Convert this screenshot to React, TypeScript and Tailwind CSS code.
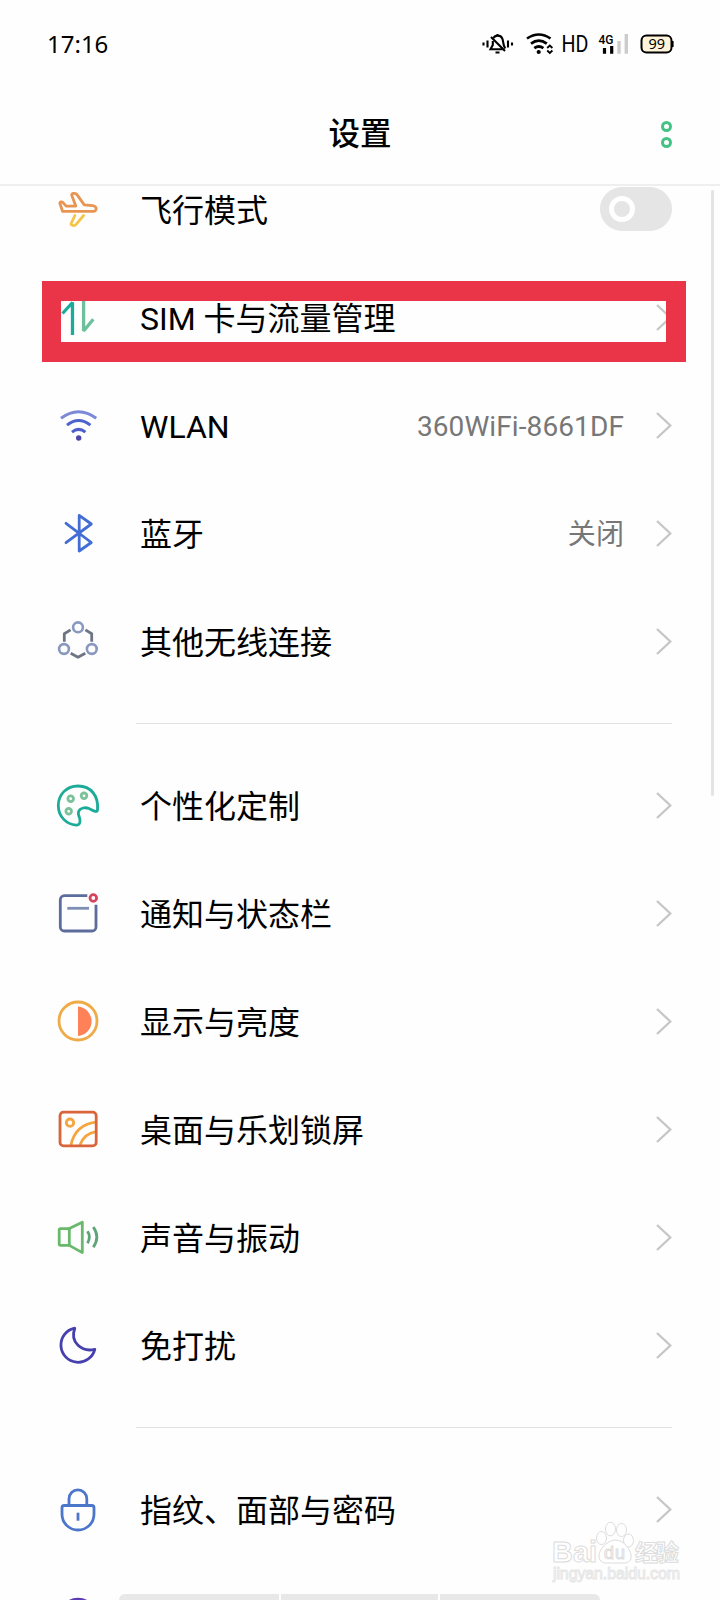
import { ReactNode } from 'react';

type Row = {
  label: string;
  icon: ReactNode;
  value?: string;
  toggle?: boolean;
  highlighted?: boolean;
};

const Icon = ({ children }: { children: ReactNode }) => (
  <svg
    viewBox="0 0 48 48"
    className="h-12 w-12 shrink-0"
    fill="none"
    strokeWidth="2.8"
    strokeLinecap="round"
    strokeLinejoin="round"
  >
    {children}
  </svg>
);

const connections: Row[] = [
  {
    label: '飞行模式',
    toggle: true,
    icon: (
      <Icon>
        <path
          d="M17.7 10.2C17 8.4 21.6 7.6 23 9.6L30.3 19.9L38.5 20.6C43.4 21.2 43.2 26.3 39.3 26.3H8.5L5.9 18.2C5.6 16.9 8 16.4 9 17.6L12.2 21.1L21.8 21Z"
          stroke="#e89552"
        />
        <path d="M20.9 30.5L17 38.8C16.4 40.3 20.4 41.4 21.9 39.6L29.6 30.5" stroke="#f3c64b" />
      </Icon>
    ),
  },
  {
    label: 'SIM 卡与流量管理',
    highlighted: true,
    icon: (
      <Icon>
        <g strokeWidth="3.3" strokeLinecap="butt" strokeLinejoin="bevel">
          <path d="M18.5 42V9.5L8.5 20.5" stroke="#1cab9a" />
          <path d="M29.6 5V38L39.3 26.2" stroke="#6ebf9b" />
        </g>
      </Icon>
    ),
  },
  {
    label: 'WLAN',
    value: '360WiFi-8661DF',
    icon: (
      <Icon>
        <g strokeWidth="3" strokeLinecap="butt">
          <path d="M7 17.3Q24.6 4.3 42.2 17.3" stroke="#7a89d8" />
          <path d="M13 24.1Q24.6 14.9 36.4 24.1" stroke="#4c63cc" />
          <path d="M18 31.2Q24.6 25.6 31.4 31.2" stroke="#4c5fca" />
        </g>
        <circle cx="24.7" cy="37" r="2.7" fill="#4f44a8" />
      </Icon>
    ),
  },
  {
    label: '蓝牙',
    value: '关闭',
    icon: (
      <Icon>
        <path d="M12 14.3L37.3 33.5L25.2 42V6.3L37.3 15L12 33.7" stroke="#416dd4" />
      </Icon>
    ),
  },
  {
    label: '其他无线连接',
    icon: (
      <Icon>
        <g stroke="#6d7483" strokeLinecap="butt">
          <path d="M16.6 12.9L10.3 16.8V24.8" />
          <path d="M31.4 12.9L37.7 16.8V24.8" />
          <path d="M16.7 36.2L24 40.2L31.3 36.2" />
        </g>
        <g stroke="#8998be" strokeWidth="2.6">
          <circle cx="24" cy="10.3" r="4.9" />
          <circle cx="10" cy="32" r="4.9" />
          <circle cx="37.8" cy="32" r="4.9" />
        </g>
      </Icon>
    ),
  },
];

const personal: Row[] = [
  {
    label: '个性化定制',
    icon: (
      <Icon>
        <path
          d="M43.5 29C44.8 15 37 5 24 5C12.5 5 4.3 13.5 4.3 24.5C4.3 36 13 43.5 22 44.1C25.5 44.3 26.4 41.8 25.9 38.5C25.5 35.5 23.5 33.5 24.6 30.6C26.2 26.6 31.5 26 35 27.6C37 28.5 38.5 29.8 41.2 30.3C42.8 30.6 43.4 30.2 43.5 29Z"
          stroke="#1cab98"
        />
        <g stroke="#7bc29a">
          <circle cx="16.7" cy="17.7" r="2.8" />
          <circle cx="30" cy="14.8" r="2.8" />
          <circle cx="14.7" cy="30.3" r="2.8" />
        </g>
      </Icon>
    ),
  },
  {
    label: '通知与状态栏',
    icon: (
      <Icon>
        <path
          d="M33.3 6.7H10.3A4 4 0 0 0 6.3 10.7V38A4 4 0 0 0 10.3 42H38A4 4 0 0 0 42 38V15.7"
          stroke="#5c6c9c"
          strokeLinecap="butt"
        />
        <path d="M13.3 19.3H35" stroke="#7f8eb4" strokeLinecap="butt" />
        <circle cx="39.3" cy="9" r="3.3" stroke="#d8435c" />
      </Icon>
    ),
  },
  {
    label: '显示与亮度',
    icon: (
      <Icon>
        <circle cx="24" cy="24" r="19" stroke="#efab48" />
        <path d="M24 9.5A14.8 14.8 0 0 1 24 39Z" fill="#ff8158" />
      </Icon>
    ),
  },
  {
    label: '桌面与乐划锁屏',
    icon: (
      <Icon>
        <g stroke="#f4a540" strokeLinecap="butt">
          <circle cx="16" cy="17.7" r="3.7" />
          <path d="M17 40C19.5 28 27 19 42 17.2" />
          <path d="M26 40C28.5 33 33 28 42 26.6" />
        </g>
        <rect x="6" y="7.2" width="36.2" height="33.7" rx="3.5" stroke="#da653b" />
      </Icon>
    ),
  },
  {
    label: '声音与振动',
    icon: (
      <Icon>
        <path d="M15.3 15.6H6.6Q5.2 15.6 5.2 17V31Q5.2 32.4 6.6 32.4H15.3Z" stroke="#69b96c" />
        <path d="M15.3 15.6L28.3 9.2V39.6L15.3 32.4" stroke="#69b96c" />
        <path d="M33.5 18.3Q37.2 24 33.5 30.2" stroke="#5da478" strokeLinecap="butt" />
        <path d="M39.3 14Q46.4 24 39.3 34.3" stroke="#5da478" strokeLinecap="butt" />
      </Icon>
    ),
  },
  {
    label: '免打扰',
    icon: (
      <Icon>
        <path
          d="M20.8 7.2A17.2 17.2 0 1 0 40.8 28.3C28 31.5 15.5 21.5 20.8 7.2Z"
          stroke="#463fae"
        />
      </Icon>
    ),
  },
];

const security: Row[] = [
  {
    label: '指纹、面部与密码',
    icon: (
      <Icon>
        <path d="M15 20V13.8A8.9 8.9 0 0 1 32.8 13.8V20" stroke="#4b76ca" />
        <path
          d="M10.2 20.5H37.8Q40 20.5 40 22.7V29C40 38 33 45 24 45S8 38 8 29V22.7Q8 20.5 10.2 20.5Z"
          stroke="#4b76ca"
        />
        <path d="M24 27.7V35.7" stroke="#4b76ca" strokeLinecap="butt" />
      </Icon>
    ),
  },
  {
    label: '',
    icon: (
      <Icon>
        <circle cx="24" cy="24.5" r="18.3" stroke="#5b3cb6" />
      </Icon>
    ),
  },
];

const Toggle = () => (
  <span className="flex h-11 w-[72px] items-center rounded-full bg-[#e5e5e5] pl-[9px]">
    <span className="h-[26px] w-[26px] rounded-full border-[5px] border-white" />
  </span>
);

const Chevron = () => (
  <svg viewBox="0 0 16 28" className="h-7 w-4" fill="none" stroke="#c6c6c6" strokeWidth="2.3">
    <path d="M1 2L14.3 14.5L1 27" />
  </svg>
);

const SettingsRow = ({ row }: { row: Row }) => (
  <div className="relative flex h-[108px] items-center pr-12 pl-[54px]">
    {row.icon}
    <span className="ml-[38px] pt-[3px] text-[32px] leading-none whitespace-nowrap text-black">
      {row.label}
    </span>
    <div className="ml-auto flex items-center gap-8">
      {row.value && (
        <span className="pt-1 text-[28px] leading-none tracking-[0.1px] text-[#777]">
          {row.value}
        </span>
      )}
      {row.toggle ? <Toggle /> : <Chevron />}
    </div>
    {row.highlighted && (
      <div className="absolute top-[18px] left-[42px] h-[81px] w-[644px] border-[20px] border-l-[19px] border-[#ea3448]" />
    )}
  </div>
);

const Divider = () => (
  <div className="flex h-14 items-center pr-12 pl-[136px]">
    <div className="h-px w-full bg-[#e2e2e2]" />
  </div>
);

const StatusBar = () => (
  <div className="flex h-[88px] items-center justify-between pr-[46px] pl-[47px]">
    <span className="font-['Noto_Sans'] text-2xl leading-none text-black">17:16</span>
    <svg viewBox="482 30 192 28" className="h-7 w-48" fill="none" stroke="#000">
      {/* muted bell */}
      <g strokeWidth="2.1">
        <path d="M483.5 42.5V45.5M487.5 40.5V47.5M508 40.5V47.5M512 42.5V45.5" />
        <path d="M492.8 41V45L490.5 49.3H502.5M493.5 38C495 35 500.5 34.5 502.3 38.5C503.5 41 502.5 44 505.2 48.5M497.5 34V36" />
        <path d="M491 37L505 51M495.5 52.5H499.5" />
      </g>
      <g strokeWidth="2.7">
        <path d="M527 38.5Q538.8 30.5 550.5 38.5" />
        <path d="M531 43.6Q538.8 37.6 546.8 43.6" />
        <path d="M534.3 48.2Q538.8 44.8 543.4 48.2" />
      </g>
      <circle cx="538.7" cy="52" r="2.1" fill="#000" stroke="none" />
      <path d="M547.2 48L549.8 45.5L552.4 48M547.2 50.5L549.8 53L552.4 50.5" strokeWidth="1.8" />
      <text
        x="561.5"
        y="52.3"
        fill="#000"
        stroke="none"
        className="font-[Roboto] text-[23px]"
        textLength="27"
        lengthAdjust="spacingAndGlyphs"
      >
        HD
      </text>
      <text
        x="598.5"
        y="43.6"
        fill="#000"
        stroke="none"
        className="font-[Roboto] text-[13px] font-medium"
        textLength="15"
        lengthAdjust="spacingAndGlyphs"
      >
        4G
      </text>
      <path d="M604.5 48V53.8M611.7 46V53.8" strokeWidth="3.2" />
      <path d="M619 41V53.8M626.3 34V53.8" stroke="#ccc" strokeWidth="3.4" />
      <rect x="641.5" y="35.5" width="30" height="17" rx="5" fill="#fff3da" strokeWidth="2" />
      <path d="M672.6 41V47" strokeWidth="2" />
      <text
        x="648.5"
        y="49.2"
        fill="#000"
        stroke="none"
        className="font-['Noto_Sans'] text-[14.5px]"
        textLength="16.5"
      >
        99
      </text>
    </svg>
  </div>
);

const Header = () => (
  <div className="grid h-[98px] grid-cols-3 items-center border-b-2 border-[#efefef] pr-12 pb-[3px]">
    <h1 className="col-start-2 pt-px pl-12 text-center text-[31.5px] leading-none font-medium text-black">
      设置
    </h1>
    <div className="flex flex-col items-end gap-[5px]">
      <span className="h-[11px] w-[11px] rounded-full border-[3px] border-[#44c286]" />
      <span className="h-[11px] w-[11px] rounded-full border-[3px] border-[#44c286]" />
    </div>
  </div>
);

const Watermark = () => (
  <svg
    viewBox="550 1518 134 68"
    className="absolute right-9 bottom-3.5 h-[68px] w-[134px]"
    fill="#fff"
    stroke="#dcdcdc"
    strokeWidth="1"
  >
    <text
      x="552"
      y="1562"
      className="font-['Liberation_Sans'] text-[30px] font-bold"
      textLength="45"
      lengthAdjust="spacingAndGlyphs"
    >
      Bai
    </text>
    <ellipse cx="601.5" cy="1538" rx="5" ry="6.5" />
    <ellipse cx="610.5" cy="1529" rx="5" ry="6.8" />
    <ellipse cx="621.5" cy="1530" rx="5" ry="6.5" />
    <ellipse cx="628.5" cy="1540.5" rx="5" ry="6.5" />
    <path d="M615 1540C606 1541 599 1550 599 1556C599 1562 604 1563.5 609 1563H622C628 1563.5 632 1561 631 1555C630 1549 624 1540 615 1540Z" />
    <text x="604" y="1559" className="font-['Liberation_Sans'] text-[18px]" textLength="21">
      du
    </text>
    <text x="635" y="1561" className="font-['Noto_Sans_CJK_SC'] text-[23px] font-bold" textLength="44">
      经验
    </text>
    <text
      x="553"
      y="1579"
      className="font-['Liberation_Sans'] text-[16px]"
      stroke="#e6e6e6"
      textLength="127"
    >
      jingyan.baidu.com
    </text>
  </svg>
);

const App = () => {
  return (
    <div className="relative flex h-[1600px] w-[720px] flex-col overflow-hidden bg-[#fefefe] font-[Roboto,'Noto_Sans_CJK_SC',sans-serif]">
      <StatusBar />
      <Header />
      <main className="min-h-0 flex-1 overflow-hidden">
        <div className="-mt-[31px]">
          {connections.map((row) => (
            <SettingsRow key={row.label} row={row} />
          ))}
          <Divider />
          {personal.map((row) => (
            <SettingsRow key={row.label} row={row} />
          ))}
          <Divider />
          {security.map((row) => (
            <SettingsRow key={row.label} row={row} />
          ))}
        </div>
      </main>

      {/* scroll thumb */}
      <div className="absolute top-[190px] left-[711px] h-[606px] w-[3px] rounded-full bg-[#e4e4e4]" />

      {/* gesture hints */}
      <div className="absolute bottom-0 left-[119px] flex h-1.5 w-[481px] gap-[2px] overflow-hidden rounded-t-md">
        <span className="w-40 bg-[#e8e8e8]" />
        <span className="flex-1 bg-[#e8e8e8]" />
        <span className="w-40 bg-[#e8e8e8]" />
      </div>
      <Watermark />
    </div>
  );
};

export default App;
